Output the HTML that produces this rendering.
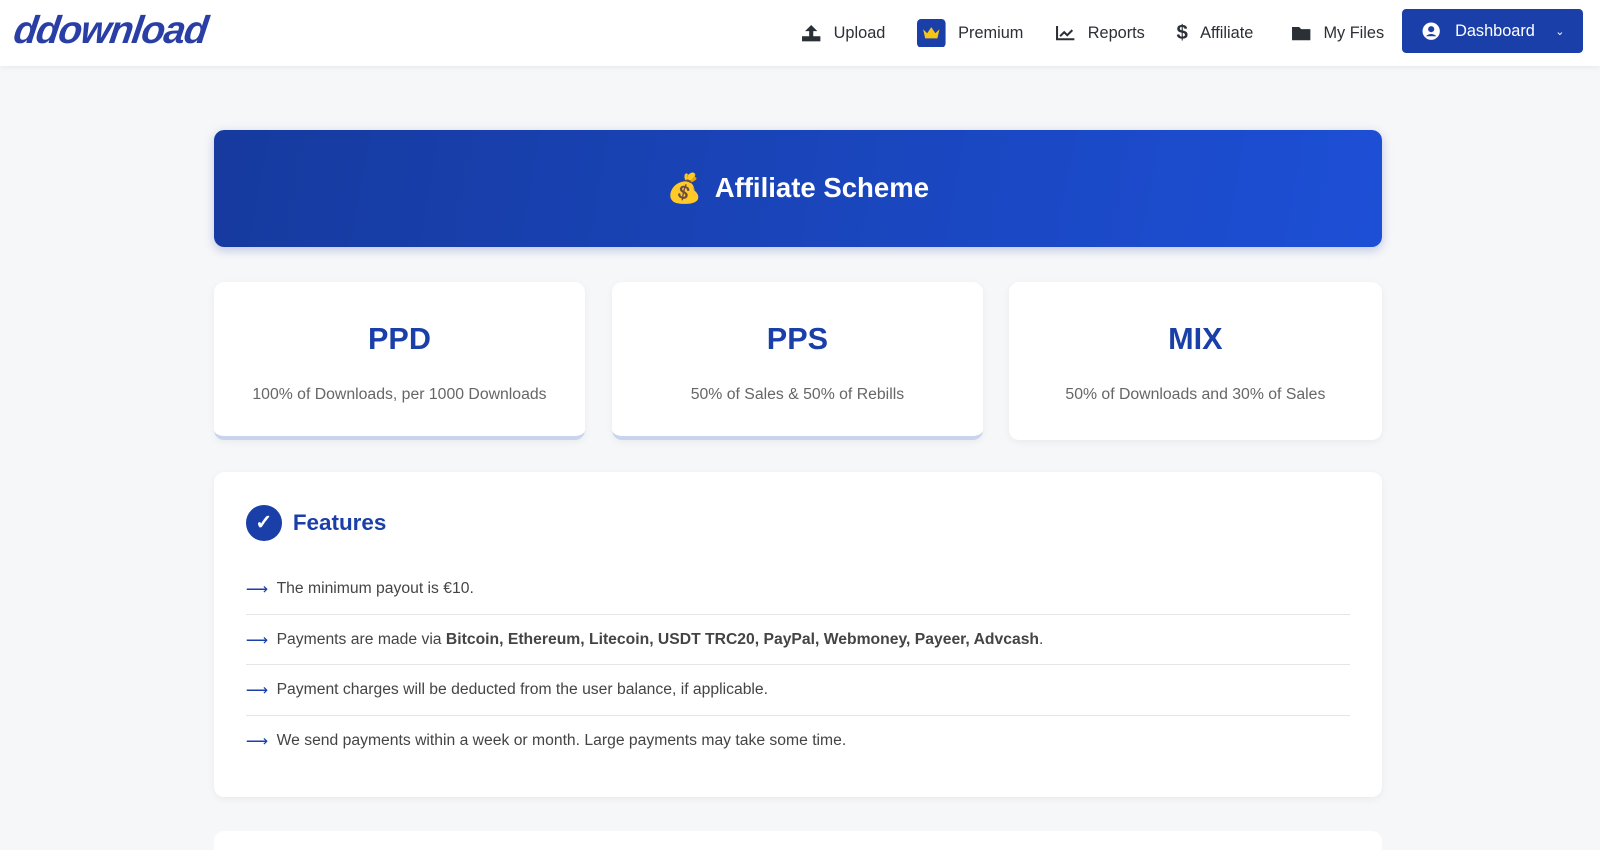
<!DOCTYPE html>
<html><head><meta charset="utf-8"><style>
*{box-sizing:border-box;margin:0;padding:0}
html,body{width:1600px;height:850px;overflow:hidden;background:#f6f7f9}
body{font-family:"Liberation Sans",Roboto,sans-serif;color:#333}
.z{zoom:1.0204;position:relative;width:1568px;height:833px}
.hdr{position:absolute;left:0;top:0;width:1568px;height:65px;background:#fff;box-shadow:0 1px 6px rgba(0,0,0,.08)}
.logo{position:absolute;left:14px;top:9px;font:italic 900 38px "Liberation Sans",sans-serif;color:#2a3fa6;letter-spacing:-1.3px;transform:skewX(-8deg)}
.nav{position:absolute;top:0;height:65px;display:flex;align-items:center;font-size:16px;color:#2b2f36;font-weight:500}
.nav span{display:flex;align-items:center;gap:12px}
.dash{position:absolute;left:1374px;top:9px;width:177px;height:43px;background:#1a3fa8;border-radius:4px;color:#fff;font-size:16px;display:flex;align-items:center;padding-left:20px;gap:14px}
.banner{position:absolute;left:210px;top:127px;width:1144px;height:115px;border-radius:10px;background:linear-gradient(100deg,#163a9e,#1d4fd6);box-shadow:0 3px 10px rgba(30,60,160,.25);color:#fff;display:flex;align-items:center;justify-content:center;font-size:27px;font-weight:700;gap:12px}
.card{position:absolute;top:276px;width:363px;height:155px;background:#fff;border-radius:10px;box-shadow:0 2px 8px rgba(0,0,0,.05);text-align:center;overflow:hidden}
.card h2{margin-top:40px;font-size:30px;color:#1a3fa8;font-weight:700}
.card p{margin-top:28px;font-size:15.5px;color:#666}
.card.b{border-bottom:4px solid #c8d3ee}
.feat{position:absolute;left:210px;top:463px;width:1144px;height:318px;background:#fff;border-radius:10px;box-shadow:0 2px 8px rgba(0,0,0,.05)}
.ft{position:absolute;left:31px;top:32px;display:flex;align-items:center;gap:11px;font-size:22px;font-weight:700;color:#1a3fa8}
.ck{width:35px;height:35px;border-radius:50%;background:#1a3fa8;color:#fff;font-size:20px;display:flex;align-items:center;justify-content:center}
ul{position:absolute;left:31px;top:90px;width:1082px;list-style:none}
li{height:49.5px;display:flex;align-items:center;font-size:15.4px;color:#444;border-bottom:1px solid #e6e6e6}
li:last-child{border:none}
li i{font-style:normal;color:#1a3fa8;margin-right:8px}
.more{position:absolute;left:210px;top:814px;width:1144px;height:60px;background:#fff;border-radius:10px}
</style></head><body><div class="z">
<div class="hdr">
<div class="logo">ddownload</div>
<div class="nav" style="left:785px"><span><svg width="20" height="18" viewBox="0 0 20 18"><path d="M10 1l-6 6h4v6h4V7h4z" fill="#2b2f36"/><rect x="1" y="12" width="18" height="5" fill="#2b2f36"/></svg>Upload</span></div>
<div class="nav" style="left:899px"><span><svg width="28" height="28" viewBox="0 0 28 28"><rect width="28" height="28" rx="4" fill="#1a3fa8"/><path d="M6 10l4 4 4-6 4 6 4-4-2 9H8z" fill="#f5c518"/></svg>Premium</span></div>
<div class="nav" style="left:1034px"><span><svg width="20" height="16" viewBox="0 0 20 16"><path d="M2 1v13h17" stroke="#2b2f36" stroke-width="2" fill="none"/><path d="M5 11l4-4 3 3 5-5" stroke="#2b2f36" stroke-width="2" fill="none"/></svg>Reports</span></div>
<div class="nav" style="left:1153px"><span><b style="font-size:20px">$</b>Affiliate</span></div>
<div class="nav" style="left:1265px"><span><svg width="20" height="16" viewBox="0 0 20 16"><path d="M1 2h7l2 2h9v11H1z" fill="#2b2f36"/></svg>My Files</span></div>
<div class="dash"><svg width="18" height="18" viewBox="0 0 18 18"><circle cx="9" cy="9" r="8.5" fill="#fff"/><circle cx="9" cy="7" r="3" fill="#1a3fa8"/><path d="M4 14c2-3 8-3 10 0" fill="#1a3fa8"/></svg>Dashboard <span style="font-size:11px;margin-left:6px">&#8964;</span></div>
</div>
<div class="banner"><span style="font-size:28px">💰</span>Affiliate Scheme</div>
<div class="card b" style="left:210px"><h2>PPD</h2><p>100% of Downloads, per 1000 Downloads</p></div>
<div class="card b" style="left:600px"><h2>PPS</h2><p>50% of Sales &amp; 50% of Rebills</p></div>
<div class="card" style="left:989px;width:365px"><h2>MIX</h2><p>50% of Downloads and 30% of Sales</p></div>
<div class="feat">
<div class="ft"><div class="ck">✓</div>Features</div>
<ul>
<li><i>⟶</i>The minimum payout is €10.</li>
<li><i>⟶</i>Payments are made via&nbsp;<b>Bitcoin, Ethereum, Litecoin, USDT TRC20, PayPal, Webmoney, Payeer, Advcash</b>.</li>
<li><i>⟶</i>Payment charges will be deducted from the user balance, if applicable.</li>
<li><i>⟶</i>We send payments within a week or month. Large payments may take some time.</li>
</ul>
</div>
<div class="more"></div>
</div></body></html>
